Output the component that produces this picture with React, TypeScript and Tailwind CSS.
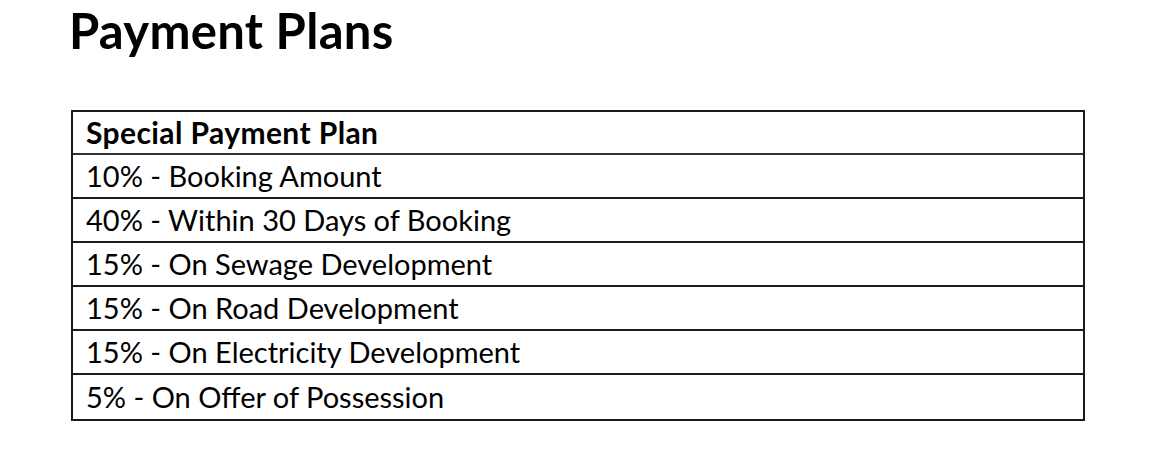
const rows = [
  "10% - Booking Amount",
  "40% - Within 30 Days of Booking",
  "15% - On Sewage Development",
  "15% - On Road Development",
  "15% - On Electricity Development",
  "5% - On Offer of Possession",
];

export default function App() {
  return (
    <div className="w-[1160px] h-[452px] bg-white text-black font-['Lato',sans-serif] overflow-hidden">
      <h1 className="pl-[69px] pt-[2px] h-[110px] text-[49px] leading-[56px] font-bold tracking-[0.3px]">Payment Plans</h1>
      <div className="ml-[71px] w-[1014px] border-2 border-[#1a1a1a]">
        <div className="h-[43px] flex items-center pl-[13px] text-[30px] font-bold tracking-[0.4px] border-b-2 border-[#333]">
          Special Payment Plan
        </div>
        {rows.map((r, i) => (
          <div
            key={r}
            className={`h-[44px] flex items-center pl-[13px] text-[29px] ${i < rows.length - 1 ? "border-b-2 border-[#1a1a1a]" : ""}`}
          >
            {r}
          </div>
        ))}
      </div>
    </div>
  );
}
